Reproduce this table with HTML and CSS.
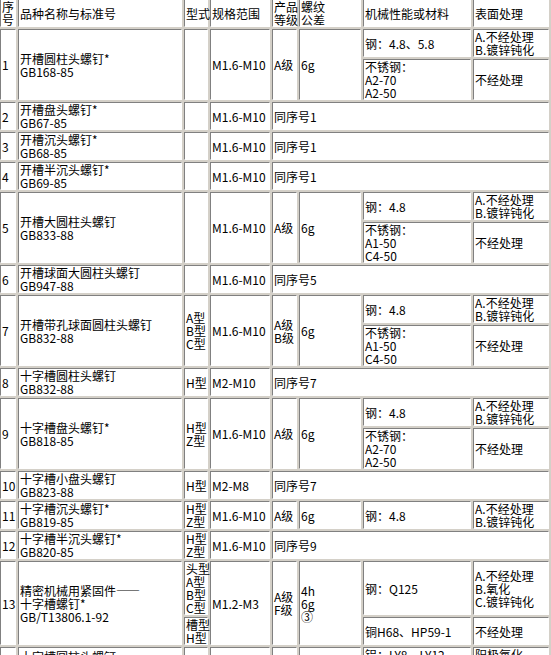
FILE: index.html
```html
<!DOCTYPE html>
<html lang="zh-CN">
<head>
<meta charset="utf-8">
<title>螺钉</title>
<link rel="stylesheet" href="styles.css">
</head>
<body>
<table class="spec">
  <colgroup>
    <col class="c-no"><col class="c-name"><col class="c-type"><col class="c-range"><col class="c-grade"><col class="c-tol"><col class="c-mat"><col class="c-surf">
  </colgroup>
  <tr>
    <td>序<br>号</td><td>品种名称与标准号</td><td>型式</td><td>规格范围</td><td>产品<br>等级</td><td>螺纹<br>公差</td><td>机械性能或材料</td><td>表面处理</td>
  </tr>
  <tr>
    <td rowspan="2">1</td><td rowspan="2">开槽圆柱头螺钉*<br>GB168-85</td><td rowspan="2"></td><td rowspan="2">M1.6-M10</td><td rowspan="2">A级</td><td rowspan="2">6g</td><td>钢：4.8、5.8</td><td>A.不经处理<br>B.镀锌钝化</td>
  </tr>
  <tr>
    <td>不锈钢：<br>A2-70<br>A2-50</td><td>不经处理</td>
  </tr>
  <tr>
    <td>2</td><td>开槽盘头螺钉*<br>GB67-85</td><td></td><td>M1.6-M10</td><td colspan="4">同序号1</td>
  </tr>
  <tr>
    <td>3</td><td>开槽沉头螺钉*<br>GB68-85</td><td></td><td>M1.6-M10</td><td colspan="4">同序号1</td>
  </tr>
  <tr>
    <td>4</td><td>开槽半沉头螺钉*<br>GB69-85</td><td></td><td>M1.6-M10</td><td colspan="4">同序号1</td>
  </tr>
  <tr>
    <td rowspan="2">5</td><td rowspan="2">开槽大圆柱头螺钉<br>GB833-88</td><td rowspan="2"></td><td rowspan="2">M1.6-M10</td><td rowspan="2">A级</td><td rowspan="2">6g</td><td>钢：4.8</td><td>A.不经处理<br>B.镀锌钝化</td>
  </tr>
  <tr>
    <td>不锈钢：<br>A1-50<br>C4-50</td><td>不经处理</td>
  </tr>
  <tr>
    <td>6</td><td>开槽球面大圆柱头螺钉<br>GB947-88</td><td></td><td>M1.6-M10</td><td colspan="4">同序号5</td>
  </tr>
  <tr>
    <td rowspan="2">7</td><td rowspan="2">开槽带孔球面圆柱头螺钉<br>GB832-88</td><td rowspan="2">A型<br>B型<br>C型</td><td rowspan="2">M1.6-M10</td><td rowspan="2">A级<br>B级</td><td rowspan="2">6g</td><td>钢：4.8</td><td>A.不经处理<br>B.镀锌钝化</td>
  </tr>
  <tr>
    <td>不锈钢：<br>A1-50<br>C4-50</td><td>不经处理</td>
  </tr>
  <tr>
    <td>8</td><td>十字槽圆柱头螺钉<br>GB832-88</td><td>H型</td><td>M2-M10</td><td colspan="4">同序号7</td>
  </tr>
  <tr>
    <td rowspan="2">9</td><td rowspan="2">十字槽盘头螺钉*<br>GB818-85</td><td rowspan="2">H型<br>Z型</td><td rowspan="2">M1.6-M10</td><td rowspan="2">A级</td><td rowspan="2">6g</td><td>钢：4.8</td><td>A.不经处理<br>B.镀锌钝化</td>
  </tr>
  <tr>
    <td>不锈钢：<br>A2-70<br>A2-50</td><td>不经处理</td>
  </tr>
  <tr>
    <td>10</td><td>十字槽小盘头螺钉<br>GB823-88</td><td>H型</td><td>M2-M8</td><td colspan="4">同序号7</td>
  </tr>
  <tr>
    <td>11</td><td>十字槽沉头螺钉*<br>GB819-85</td><td>H型<br>Z型</td><td>M1.6-M10</td><td>A级</td><td>6g</td><td>钢：4.8</td><td>A.不经处理<br>B.镀锌钝化</td>
  </tr>
  <tr>
    <td>12</td><td>十字槽半沉头螺钉*<br>GB820-85</td><td>H型<br>Z型</td><td>M1.6-M10</td><td colspan="4">同序号9</td>
  </tr>
  <tr>
    <td rowspan="2">13</td><td rowspan="2">精密机械用紧固件——<br>十字槽螺钉*<br>GB/T13806.1-92</td><td>头型<br>A型<br>B型<br>C型</td><td rowspan="2">M1.2-M3</td><td rowspan="2">A级<br>F级</td><td rowspan="2">4h<br>6g<br>③</td><td>钢：Q125</td><td>A.不经处理<br>B.氧化<br>C.镀锌钝化</td>
  </tr>
  <tr>
    <td>槽型<br>H型</td><td>铜H68、HP59-1</td><td>不经处理</td>
  </tr>
  <tr>
    <td rowspan="2">14</td><td rowspan="2">十字槽圆柱头螺钉<br>GB/T13806.2-92</td><td rowspan="2">H型</td><td rowspan="2">M1.6-M3</td><td rowspan="2">A级</td><td rowspan="2">6g</td><td>铝：LY8、LY12</td><td>阳极氧化</td>
  </tr>
  <tr>
    <td>钢：Q125</td><td>不经处理</td>
  </tr>
</table>
</body>
</html>
```

FILE: styles.css
```css
html, body {
  margin: 0;
  padding: 0;
  background: #ffffff;
}

.spec {
  border-collapse: separate;
  border-spacing: 2px;
  background: #d4d0c8;
  table-layout: fixed;
  width: 553px;
  margin: -3px 0 0 -2px;
  font-family: "Noto Sans CJK SC", "Noto Sans", sans-serif;
  font-size: 12px;
  line-height: 13px;
  color: #000000;
}

.spec td {
  background: #ffffff;
  border: 1px solid;
  border-color: #808080 #ffffff #ffffff #808080;
  padding: 0 0 0 1px;
  vertical-align: middle;
  text-align: left;
  white-space: nowrap;
}

.c-no { width: 16px; }
.c-name { width: 164px; }
.c-type { width: 24px; }
.c-range { width: 60px; }
.c-grade { width: 25px; }
.c-tol { width: 62px; }
.c-mat { width: 108px; }
.c-surf { width: 76px; }
```
